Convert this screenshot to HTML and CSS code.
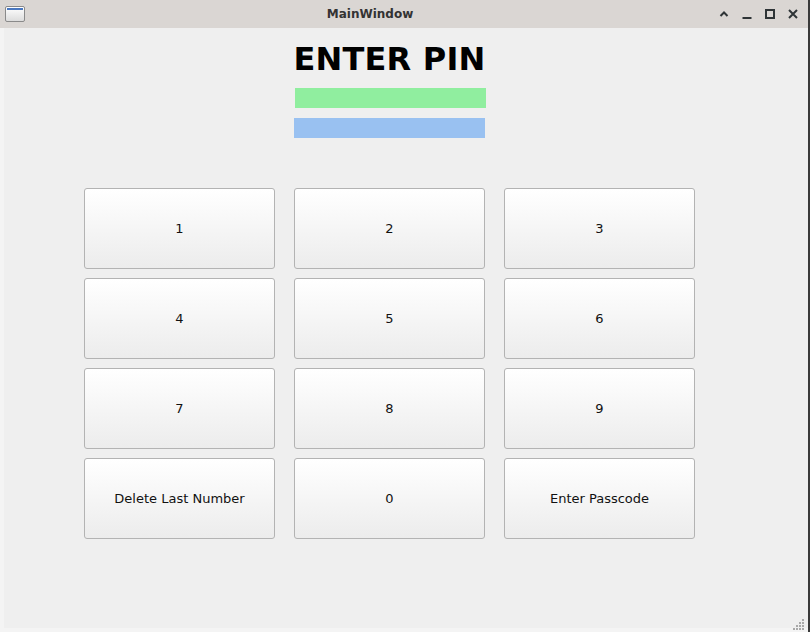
FILE: index.html
```html
<!DOCTYPE html>
<html>
<head>
<meta charset="utf-8">
<title>MainWindow</title>
<link rel="stylesheet" href="styles.css">
</head>
<body>
<div class="window">
  <div class="titlebar">
    <div class="app-icon"><span class="app-icon-bar"></span></div>
    <div class="title">MainWindow</div>
    <div class="controls">
      <svg class="ctl" width="12" height="12" viewBox="0 0 12 12"><path d="M2.5 8 L6 4.5 L9.5 8" fill="none" stroke="#2e3436" stroke-width="2"/></svg>
      <svg class="ctl" width="12" height="12" viewBox="0 0 12 12"><path d="M1.5 10 H10.5" fill="none" stroke="#2e3436" stroke-width="2"/></svg>
      <svg class="ctl" width="12" height="12" viewBox="0 0 12 12"><rect x="2" y="2" width="8" height="8" fill="none" stroke="#2e3436" stroke-width="2"/></svg>
      <svg class="ctl" width="12" height="12" viewBox="0 0 12 12"><path d="M2 2 L10 10 M10 2 L2 10" fill="none" stroke="#2e3436" stroke-width="2"/></svg>
    </div>
  </div>
  <div class="content">
    <div class="panel">
      <h1 class="heading">ENTER PIN</h1>
      <div class="bar bar-green"></div>
      <div class="bar bar-blue"></div>
      <div class="keypad">
        <button class="key">1</button>
        <button class="key">2</button>
        <button class="key">3</button>
        <button class="key">4</button>
        <button class="key">5</button>
        <button class="key">6</button>
        <button class="key">7</button>
        <button class="key">8</button>
        <button class="key">9</button>
        <button class="key">Delete Last Number</button>
        <button class="key">0</button>
        <button class="key">Enter Passcode</button>
      </div>
    </div>
    <div class="grip">
      <svg width="12" height="12" viewBox="0 0 12 12">
        <g fill="#a9a9a9">
          <rect x="9" y="0" width="2" height="2"/>
          <rect x="6" y="3" width="2" height="2"/><rect x="9" y="3" width="2" height="2"/>
          <rect x="3" y="6" width="2" height="2"/><rect x="6" y="6" width="2" height="2"/><rect x="9" y="6" width="2" height="2"/>
          <rect x="0" y="9" width="2" height="2"/><rect x="3" y="9" width="2" height="2"/><rect x="6" y="9" width="2" height="2"/><rect x="9" y="9" width="2" height="2"/>
        </g>
      </svg>
    </div>
  </div>
</div>
</body>
</html>
```

FILE: styles.css
```css
html, body {
  margin: 0;
  padding: 0;
  width: 810px;
  height: 632px;
  overflow: hidden;
  background: #f4f4f4;
  font-family: "DejaVu Sans", sans-serif;
}

.window {
  width: 810px;
  height: 632px;
  display: flex;
  flex-direction: column;
  box-sizing: border-box;
  border-right: 2px solid #3a3a3a;
}

.titlebar {
  height: 28px;
  flex: none;
  background: #dad6d3;
  display: flex;
  align-items: center;
  position: relative;
}

.app-icon {
  margin-left: 5px;
  width: 20px;
  height: 16px;
  border: 1px solid #8a8a8a;
  border-radius: 2px;
  background: linear-gradient(#ffffff, #dcdcdc);
  box-sizing: border-box;
  display: flex;
  flex-direction: column;
}

.app-icon-bar {
  height: 2px;
  background: #4a78c0;
  margin: 1px 1px 0;
}

.title {
  position: absolute;
  left: 0;
  right: 0;
  top: 0;
  line-height: 28px;
  text-align: center;
  font-weight: bold;
  font-size: 12px;
  color: #333333;
  padding-right: 68px;
  pointer-events: none;
}

.controls {
  margin-left: auto;
  display: flex;
  gap: 11px;
  margin-right: 9px;
}

.content {
  flex: 1;
  margin-left: 4px;
  margin-bottom: 4px;
  background: #efefef;
  position: relative;
  padding-left: 80px;
}

.panel {
  width: 611px;
  display: flex;
  flex-direction: column;
  align-items: center;
}

.heading {
  margin: 15px 0 0;
  font-size: 32px;
  line-height: 32px;
  font-weight: bold;
  color: #000;
  letter-spacing: 0.2px;
}

.bar {
  width: 191px;
  height: 20px;
}

.bar-green {
  margin-top: 13px;
  background: #90ee9f;
  position: relative;
  left: 1px;
}

.bar-blue {
  margin-top: 10px;
  background: #99c1f1;
}

.keypad {
  margin-top: 50px;
  display: grid;
  grid-template-columns: repeat(3, 191px);
  grid-auto-rows: 81px;
  column-gap: 19px;
  row-gap: 9px;
}

.key {
  margin: 0;
  padding: 0;
  border: 1px solid #b3b3b3;
  border-radius: 3px;
  background: linear-gradient(#ffffff, #ececec);
  font-family: "DejaVu Sans", sans-serif;
  font-size: 13px;
  color: #111111;
}

.grip {
  position: absolute;
  right: 3px;
  bottom: 0px;
  width: 12px;
  height: 12px;
}
```
